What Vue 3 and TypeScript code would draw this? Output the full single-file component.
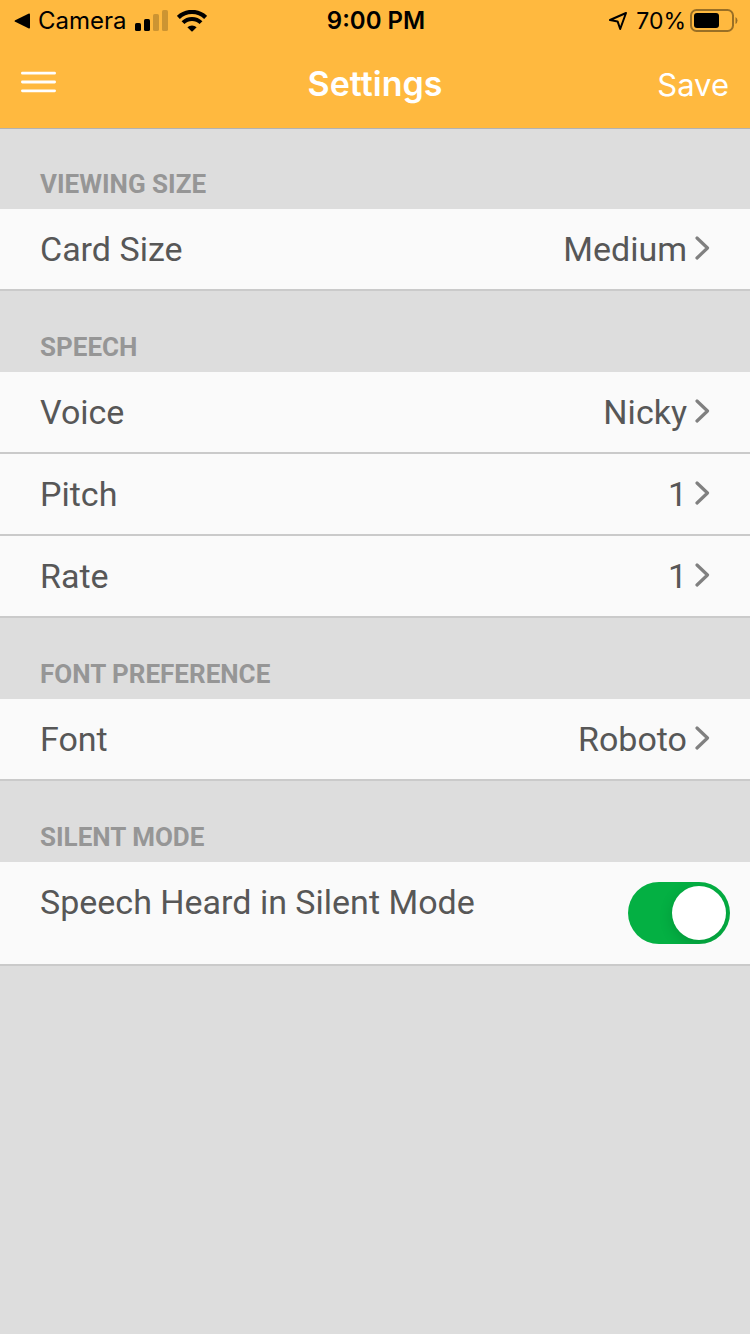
<script setup lang="ts">
import { ref } from 'vue'

interface Setting {
  label: string
  value: string
}

interface Section {
  title: string
  items: Setting[]
}

const sections: Section[] = [
  { title: 'VIEWING SIZE', items: [{ label: 'Card Size', value: 'Medium' }] },
  {
    title: 'SPEECH',
    items: [
      { label: 'Voice', value: 'Nicky' },
      { label: 'Pitch', value: '1' },
      { label: 'Rate', value: '1' },
    ],
  },
  { title: 'FONT PREFERENCE', items: [{ label: 'Font', value: 'Roboto' }] },
]

const heardInSilentMode = ref<boolean>(true)
</script>

<template>
  <div class="screen">
    <header class="top">
      <div class="status">
        <div class="status-side">
          <a class="back" href="#camera">
            <svg width="16" height="16" viewBox="0 0 16 16" aria-hidden="true">
              <path d="M1.2 7.2 L14.4 0.8 Q16 0.2 16 1.6 V14.4 Q16 15.8 14.4 15.2 L1.2 8.8 Q-0.2 8 1.2 7.2Z" />
            </svg>
            <span>Camera</span>
          </a>
          <svg class="signal" width="33" height="22" viewBox="0 0 33 22" aria-hidden="true">
            <rect x="0" y="13" width="6" height="8" rx="1.6" />
            <rect x="9" y="9" width="6" height="12" rx="1.6" />
            <rect x="18" y="4" width="6" height="17" rx="1.6" opacity="0.2" />
            <rect x="27" y="0" width="6" height="21" rx="1.6" opacity="0.2" />
          </svg>
          <svg class="wifi" width="30" height="22" viewBox="0 0 30 22" aria-hidden="true">
            <path d="M1.4 7.4 A19.6 19.6 0 0 1 28.6 7.4" fill="none" stroke="#000" stroke-width="4.2" />
            <path d="M6 12.6 A12.8 12.8 0 0 1 24 12.6" fill="none" stroke="#000" stroke-width="4" />
            <path d="M10.4 17.2 A6.8 6.8 0 0 1 19.6 17.2 L15.6 21.3 Q15 21.9 14.4 21.3Z" />
          </svg>
        </div>
        <time class="clock">9:00 PM</time>
        <div class="status-side end">
          <svg class="location" width="20" height="20" viewBox="0 0 20 20" aria-hidden="true">
            <path
              d="M18 2 L2 9 L9.6 10.4 L12.2 18Z"
              fill="none"
              stroke="#000"
              stroke-width="2"
              stroke-linejoin="round"
            />
          </svg>
          <span class="percent">70%</span>
          <svg class="battery" width="48" height="24" viewBox="0 0 48 24" aria-hidden="true">
            <rect x="1" y="1" width="42" height="21" rx="5.5" fill="none" stroke="#000" stroke-opacity="0.4" stroke-width="2" />
            <rect x="4" y="4" width="25" height="15" rx="3" />
            <path d="M45.5 8 Q47.5 9 47.5 11.5 T45.5 15Z" opacity="0.4" />
          </svg>
        </div>
      </div>
      <nav class="bar">
        <button class="menu" type="button" aria-label="Menu">
          <svg width="35" height="22" viewBox="0 0 35 22" aria-hidden="true">
            <path d="M1.4 2.2H33.6M1.4 11H33.6M1.4 19.8H33.6" stroke="#fff" stroke-width="2.8" stroke-linecap="round" />
          </svg>
        </button>
        <h1>Settings</h1>
        <button class="save" type="button">Save</button>
      </nav>
    </header>

    <main>
      <section v-for="section in sections" :key="section.title">
        <h2>{{ section.title }}</h2>
        <button v-for="item in section.items" :key="item.label" class="row" type="button">
          <span>{{ item.label }}</span>
          <span class="value">
            {{ item.value }}
            <svg width="15" height="24" viewBox="0 0 15 24" aria-hidden="true">
              <path d="M2 2 L12.5 12 L2 22" fill="none" stroke="#808080" stroke-width="3.2" stroke-linecap="round" stroke-linejoin="round" />
            </svg>
          </span>
        </button>
      </section>
      <section>
        <h2>SILENT MODE</h2>
        <div class="row toggle-row">
          <label for="silent-mode">Speech Heard in Silent Mode</label>
          <input id="silent-mode" v-model="heardInSilentMode" class="switch" type="checkbox" role="switch" />
        </div>
      </section>
    </main>
  </div>
</template>

<style>
body {
  margin: 0;
  background: #ddd;
}
</style>

<style scoped>
.screen {
  min-height: 100vh;
  background: #ddd;
  color: #575757;
  font-family: Roboto, 'Liberation Sans', sans-serif;
}

button {
  border: 0;
  padding: 0;
  background: none;
  color: inherit;
  font: inherit;
  cursor: pointer;
}

svg {
  display: block;
  flex: none;
}

.top {
  position: relative;
  height: 128px;
  background: #ffb93f;
  box-shadow: 0 1px 0 #b2b2b2;
  font-family: Inter, 'Liberation Sans', sans-serif;
}

.status {
  display: grid;
  grid-template-columns: 1fr auto 1fr;
  align-items: center;
  height: 40px;
  padding: 0 12px 0 14px;
  color: #000;
  font-size: 24px;
  line-height: 42px;
}

.status-side {
  display: flex;
  align-items: center;
}

.end {
  justify-content: flex-end;
}

.back {
  display: flex;
  align-items: center;
  gap: 8px;
  color: inherit;
  text-decoration: none;
}

.signal {
  margin-left: 8px;
}

.wifi {
  margin-left: 9px;
}

.location {
  margin-right: 8px;
}

.percent {
  font-size: 23px;
}

.battery {
  margin-left: 4px;
}

.clock {
  font-weight: 600;
}

.bar {
  display: grid;
  grid-template-columns: 1fr auto 1fr;
  align-items: center;
  height: 88px;
  padding: 0 21px;
  color: #fff;
}

.menu {
  justify-self: start;
  padding-bottom: 4px;
}

h1 {
  margin: 0;
  font-size: 34px;
  font-weight: 600;
  line-height: 88px;
}

.save {
  justify-self: end;
  font-size: 31px;
}

h2 {
  height: 81px;
  box-sizing: border-box;
  margin: 0;
  padding: 41px 40px 0;
  color: #969696;
  font-size: 26px;
  font-weight: 700;
  line-height: 30px;
}

.row {
  display: flex;
  justify-content: space-between;
  width: 100%;
  box-sizing: border-box;
  padding: 20px 40px;
  border-bottom: 2px solid #cacaca;
  background: #fafafa;
  font-size: 34px;
  line-height: 40px;
  text-align: left;
}

.value {
  display: flex;
  gap: 8px;
}

.value svg {
  margin-top: 7px;
}

.toggle-row {
  padding-right: 20px;
}

.switch {
  flex: none;
  display: flex;
  width: 102px;
  height: 62px;
  box-sizing: border-box;
  margin: 0;
  padding: 4px;
  border-radius: 31px;
  background: #ccc;
  overflow: hidden;
  appearance: none;
  cursor: pointer;
}

.switch::before {
  content: '';
  width: 54px;
  height: 54px;
  border-radius: 50%;
  background: #fff;
  box-shadow: 0 4px 14px rgba(0, 0, 0, 0.15);
}

.switch:checked {
  justify-content: flex-end;
  background: #04b043;
}
</style>
